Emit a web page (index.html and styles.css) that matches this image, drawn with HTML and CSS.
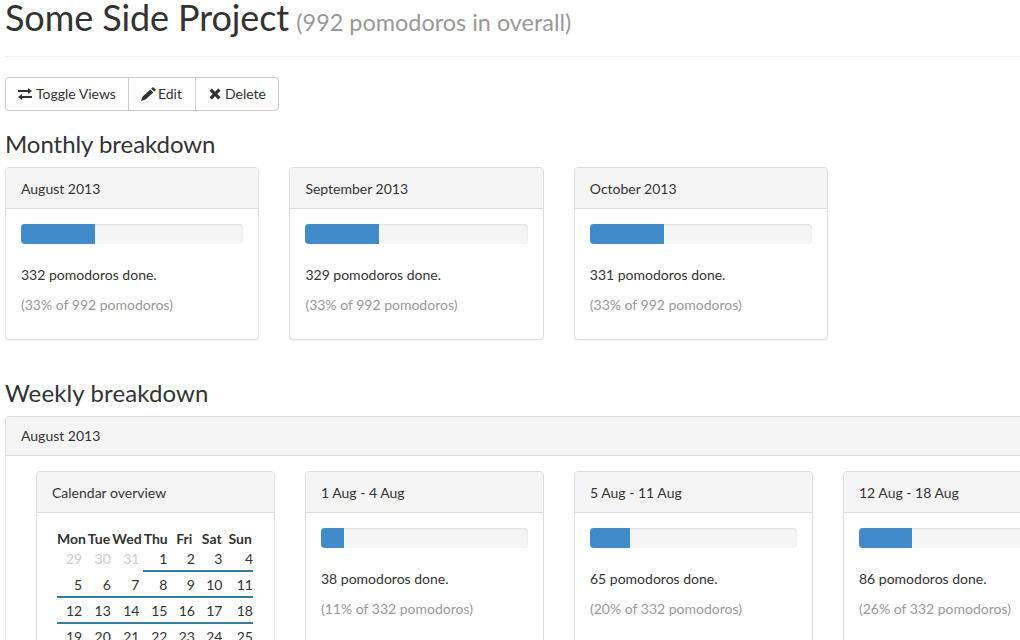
FILE: index.html
```html
<!DOCTYPE html>
<html lang="en">
<head>
<meta charset="UTF-8">
<title>Some Side Project</title>
<link rel="stylesheet" href="styles.css">
</head>
<body>
<div class="container">
    <div class="page-header">
        <h1>Some Side Project <small>(992 pomodoros in overall)</small></h1>
    </div>

    <div class="btn-group">
        <a class="btn btn-toggle">
            <svg class="icon" width="14" height="12" viewBox="0 0 14 12"><path d="M0 2h10V0l4 3-4 3V4H0zM14 8H4V6l-4 3 4 3v-2h10z" fill="#333"/></svg>
            Toggle Views
        </a>
        <a class="btn btn-edit">
            <svg class="icon" width="15" height="14" viewBox="0 0 15 14"><path d="M12 0l3 2.800-1.800 1.700-3-2.800zM9.300 2.600l3 2.800L4.600 12.600 0 14l1.400-4.300z" fill="#333"/></svg>
            Edit
        </a>
        <a class="btn btn-delete">
            <svg class="icon" width="13" height="12" viewBox="-1 0 13 12"><path d="M2.800.5L6 3.700 9.200.5l2.300 2.300L8.300 6l3.200 3.200-2.300 2.300L6 8.300l-3.200 3.200L.5 9.200 3.700 6 .5 2.800z" fill="#333"/></svg>
            Delete
        </a>
    </div>

    <h3 class="monthly-title">Monthly breakdown</h3>
    <div class="row months">
        <div class="panel">
            <div class="panel-heading">August 2013</div>
            <div class="panel-body">
                <div class="progress"><div class="bar" style="width: 33.47%"></div></div>
                <p>332 pomodoros done.</p>
                <p class="muted">(33% of 992 pomodoros)</p>
            </div>
        </div>
        <div class="panel">
            <div class="panel-heading">September 2013</div>
            <div class="panel-body">
                <div class="progress"><div class="bar" style="width: 33.16%"></div></div>
                <p>329 pomodoros done.</p>
                <p class="muted">(33% of 992 pomodoros)</p>
            </div>
        </div>
        <div class="panel">
            <div class="panel-heading">October 2013</div>
            <div class="panel-body">
                <div class="progress"><div class="bar" style="width: 33.37%"></div></div>
                <p>331 pomodoros done.</p>
                <p class="muted">(33% of 992 pomodoros)</p>
            </div>
        </div>
    </div>

    <h3 class="weekly-title">Weekly breakdown</h3>
    <div class="panel outer">
        <div class="panel-heading outer-heading">August 2013</div>
        <div class="outer-body">
            <div class="panel week">
                <div class="panel-heading">Calendar overview</div>
                <div class="panel-body">
                    <table class="calendar">
                        <tr><th>Mon</th><th>Tue</th><th>Wed</th><th>Thu</th><th>Fri</th><th>Sat</th><th>Sun</th></tr>
                        <tr><td class="off">29</td><td class="off">30</td><td class="off">31</td><td class="on">1</td><td class="on">2</td><td class="on">3</td><td class="on">4</td></tr>
                        <tr><td class="on">5</td><td class="on">6</td><td class="on">7</td><td class="on">8</td><td class="on">9</td><td class="on">10</td><td class="on">11</td></tr>
                        <tr><td class="on">12</td><td class="on">13</td><td class="on">14</td><td class="on">15</td><td class="on">16</td><td class="on">17</td><td class="on">18</td></tr>
                        <tr><td class="on">19</td><td class="on">20</td><td class="on">21</td><td class="on">22</td><td class="on">23</td><td class="on">24</td><td class="on">25</td></tr>
                    </table>
                </div>
            </div>
            <div class="panel week">
                <div class="panel-heading">1 Aug - 4 Aug</div>
                <div class="panel-body">
                    <div class="progress"><div class="bar" style="width: 11.1%"></div></div>
                    <p>38 pomodoros done.</p>
                    <p class="muted">(11% of 332 pomodoros)</p>
                </div>
            </div>
            <div class="panel week">
                <div class="panel-heading">5 Aug - 11 Aug</div>
                <div class="panel-body">
                    <div class="progress"><div class="bar" style="width: 19.4%"></div></div>
                    <p>65 pomodoros done.</p>
                    <p class="muted">(20% of 332 pomodoros)</p>
                </div>
            </div>
            <div class="panel week">
                <div class="panel-heading">12 Aug - 18 Aug</div>
                <div class="panel-body">
                    <div class="progress"><div class="bar" style="width: 25.6%"></div></div>
                    <p>86 pomodoros done.</p>
                    <p class="muted">(26% of 332 pomodoros)</p>
                </div>
            </div>
        </div>
    </div>
</div>
</body>
</html>
```

FILE: styles.css
```css
html, body {
    height: 640px;
    overflow: hidden;
}
body {
    margin: 0;
    font-family: Lato, sans-serif;
    font-size: 14px;
    line-height: 20px;
    color: #333;
    background-color: #fff;
}
.container {
    width: 1109px;
    margin-left: 5px;
}
.page-header {
    height: 56px;
    border-bottom: 1px solid #eee;
    margin-bottom: 20px;
}
h1 {
    margin: 0;
    font-size: 36px;
    font-weight: 400;
    line-height: 34px;
    letter-spacing: -0.1px;
}
h1 small {
    margin-left: -2px;
    font-size: 23.4px;
    letter-spacing: 0.02px;
    color: #999;
}
.btn-group {
    display: inline-flex;
    vertical-align: top;
}
.btn {
    display: flex;
    align-items: center;
    gap: 3px;
    height: 32px;
    padding: 0 12px;
    border: 1px solid #ccc;
    margin-left: -1px;
    background-color: #fff;
}
.btn-toggle {
    gap: 4px;
    margin-left: 0;
    border-radius: 4px 0 0 4px;
}
.btn-edit {
    gap: 2px;
    padding-right: 13px;
}
.btn-delete {
    gap: 4px;
    border-radius: 0 4px 4px 0;
}
h3 {
    margin: 19px 0 10px;
    font-size: 24px;
    font-weight: 400;
    line-height: 27px;
}
.monthly-title {
    letter-spacing: -0.05px;
}
.weekly-title {
    margin-top: 39px;
    letter-spacing: 0.12px;
}
.row {
    display: flex;
    gap: 30px;
}
.panel {
    background-color: #fff;
    border: 1px solid #ddd;
    border-radius: 4px;
    box-shadow: 0 1px 1px rgba(0, 0, 0, 0.05);
    box-sizing: border-box;
}
.months .panel {
    width: 254.4px;
    height: 173px;
}
.panel-heading {
    padding: 11px 15px 10px;
    height: 41px;
    box-sizing: border-box;
    background-color: #f5f5f5;
    border-bottom: 1px solid #ddd;
    border-radius: 3px 3px 0 0;
}
.outer .outer-heading {
    height: 39px;
    padding: 9px 15px;
}
.panel-body {
    padding: 15px;
}
.progress {
    height: 20px;
    margin-bottom: 21px;
    background-color: #f5f5f5;
    border-radius: 4px;
    overflow: hidden;
    box-shadow: inset 0 1px 2px rgba(0, 0, 0, 0.1);
}
.bar {
    height: 100%;
    background-color: #428bca;
}
p {
    margin: 0 0 10px;
}
.muted {
    color: #999;
}
.outer {
    width: 1109px;
    height: 400px;
}
.outer-body {
    display: flex;
    gap: 30px;
    padding: 15px 30px;
}
.week {
    flex: 0 0 239px;
    height: 300px;
}
.calendar {
    border-collapse: collapse;
    table-layout: fixed;
    width: 196px;
    margin-left: 5px;
}
.calendar th {
    width: 28.67px;
    height: 17px;
    padding: 4px 2px 0 0;
    box-sizing: border-box;
    line-height: 13px;
    font-weight: 700;
    text-align: center;
    white-space: nowrap;
}
.calendar th:nth-child(3) {
    text-indent: -2px;
}
.calendar th:nth-child(n+4) {
    width: 27.5px;
}
.calendar th:nth-child(5),
.calendar th:nth-child(6) {
    padding-right: 0;
}
.calendar th:nth-child(7) {
    padding: 4px 0 0 2px;
}
.calendar td {
    height: 26px;
    padding: 2px 3.5px 0 0;
    box-sizing: border-box;
    text-align: right;
}
.calendar td:nth-child(n+4) {
    padding-right: 3px;
}
.calendar td:last-child {
    padding-right: 0;
}
.calendar .off {
    color: #ccc;
}
.calendar .on {
    border-bottom: 2px solid #337ca5;
}
```
